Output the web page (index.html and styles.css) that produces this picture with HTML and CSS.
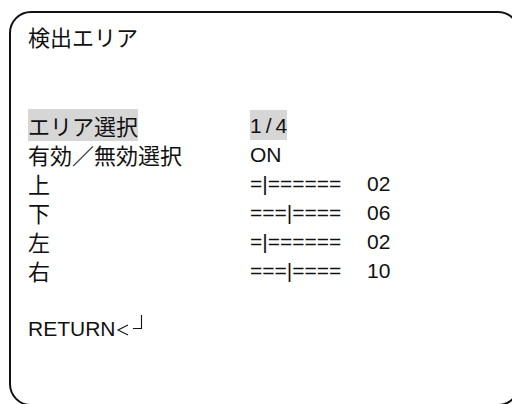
FILE: index.html
```html
<!DOCTYPE html>
<html lang="ja">
  <head>
    <meta charset="utf-8">
    <title>検出エリア</title>
    <link rel="stylesheet" href="styles.css">
  </head>
  <body>
    <div class="screen">
      <div class="frame">
        <div class="title">検出エリア</div>
        <div class="blank"></div>
        <div class="blank"></div>

        <div class="menu">
          <div class="label"><span class="sel">エリア選択</span></div>
          <div class="value"><span class="sel">1<span class="sl">/</span>4</span></div>
          <div class="num"></div>

          <div class="label">有効／無効選択</div>
          <div class="value">ON</div>
          <div class="num"></div>

          <div class="label">上</div>
          <div class="value">=|======</div>
          <div class="num">02</div>

          <div class="label">下</div>
          <div class="value">===|====</div>
          <div class="num">06</div>

          <div class="label">左</div>
          <div class="value">=|======</div>
          <div class="num">02</div>

          <div class="label">右</div>
          <div class="value">===|====</div>
          <div class="num">10</div>
        </div>

        <div class="blank"></div>
        <div class="return">RETURN<svg class="enter" width="28" height="22" viewBox="0 0 28 22"><path d="M12 11 L2 16 L12 21" fill="none" stroke="#111" stroke-width="1.1"/><path d="M17 14.5 H25.5 V1" fill="none" stroke="#111" stroke-width="1.1"/></svg></div>
      </div>
    </div>
  </body>
</html>
```
FILE: styles.css
```css
html, body {
  margin: 0;
  padding: 0;
  background: #fff;
}

body {
  color: #111;
  font-family: "Liberation Sans", "Noto Sans CJK JP", sans-serif;
  font-size: 21px;
  line-height: 29px;
}

/* the frame runs past the right and bottom edges */
.screen {
  width: 512px;
  height: 404px;
  overflow: hidden;
  padding: 11px 0 0 9px;
  box-sizing: border-box;
}

.frame {
  box-sizing: border-box;
  width: 511px;
  height: 395px;
  padding: 9px 0 0 17px;
  border: 2px solid #111;
  border-radius: 22px;
}

.title,
.label {
  font-family: "Noto Sans CJK JP", sans-serif;
  font-size: 22px;
}

.title {
  margin-bottom: 2px;
}

.blank {
  height: 29px;
}

.menu {
  display: grid;
  grid-template-columns: 222px 117px auto;
}

.sel {
  background: #d6d6d6;
}

.value .sel {
  padding: 4px 0 3px;
}

.sl {
  padding: 0 4px;
}

.enter {
  vertical-align: baseline;
}
```
